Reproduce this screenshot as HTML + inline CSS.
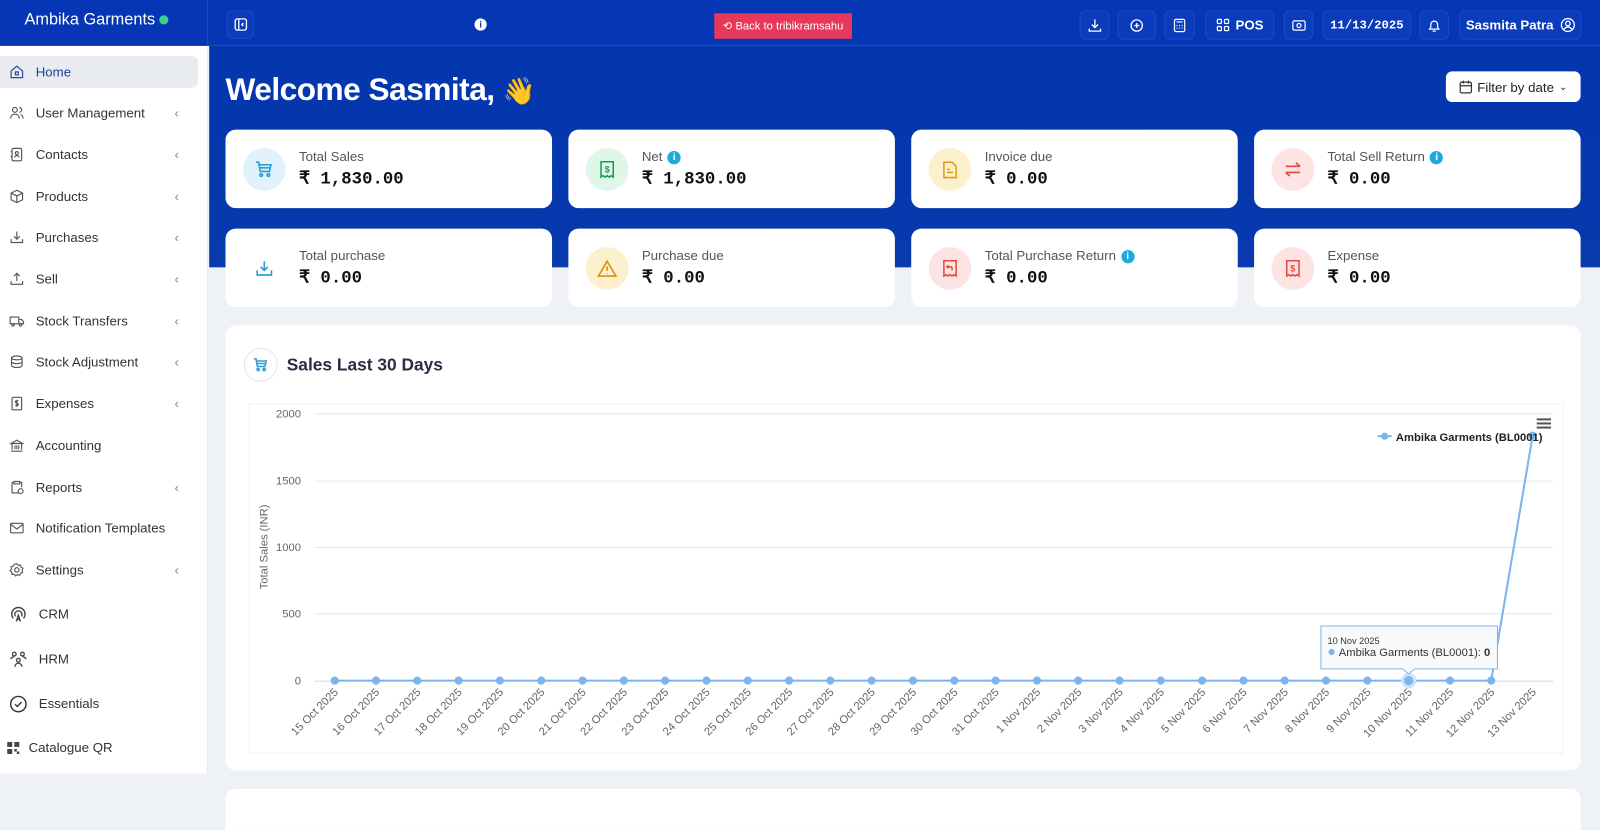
<!DOCTYPE html>
<html><head><meta charset="utf-8"><style>
*{box-sizing:border-box;margin:0;padding:0}
body{width:1600px;height:808px;overflow:hidden;background:#eef1f5;font-family:"Liberation Sans",sans-serif;position:relative}
#w{position:absolute;left:0;top:0;width:1568px;height:792px;transform:scale(1.020408);transform-origin:0 0}
.abs{position:absolute}
.top{left:0;top:0;width:1568px;height:45px;background:#0536b3;border-bottom:1px solid #1d4cc4}
.brand{left:0;top:0;width:204px;height:45px;background:#0636b5;color:#fff;font-size:16px;padding:11px 0 0 24px;border-right:1px solid #1d4cc4}
.brand i{display:inline-block;width:9px;height:9px;border-radius:50%;background:#3ecf8e;margin-left:4px}
.hero{left:205px;top:45px;width:1363px;height:217px;background:linear-gradient(#0335ad,#073aad)}
.side{left:0;top:45px;width:204px;height:713px;background:#fff;border-right:1px solid #e3e6ec}
.mi{position:absolute;left:0;width:194px;height:31px;font-size:13px;color:#333;display:flex;align-items:center}
.mi svg{position:absolute;left:9px;width:15px;height:15px}
.mi span{position:absolute;left:35px}
.mi b{position:absolute;left:171px;font-weight:normal;color:#888;font-size:13px}
.hb{position:absolute;top:10px;height:29px;border-radius:6px;background:#0a3cbc;border:1px solid #1a4ac6;color:#fff;font-size:13px;font-weight:bold;display:flex;align-items:center;justify-content:center;gap:6px}
.card{position:absolute;width:320px;background:#fff;border-radius:10px;height:77px}
.card .ic{position:absolute;left:17px;top:18px;width:42px;height:42px;border-radius:50%;display:flex;align-items:center;justify-content:center}
.card .t{position:absolute;left:72px;top:19px;font-size:13px;color:#555}
.card .v{position:absolute;left:72px;top:38px;font-size:17px;font-weight:bold;font-family:"Liberation Mono",monospace;color:#111}
.inf{display:inline-block;width:13px;height:13px;border-radius:50%;background:#1eaadf;color:#fff;font-size:10px;text-align:center;line-height:13px;font-weight:bold;margin-left:5px;vertical-align:1px}
</style></head><body><div id="w">
<div class="abs top"></div>
<div class="abs brand">Ambika Garments<i></i></div>
<div class="abs hero"></div>
<div class="hb" style="left:222px;width:27px;top:10px;height:28px"><svg width="14" height="14" viewBox="0 0 14 14" fill="none" stroke="#fff" stroke-width="1.3"><rect x="1.5" y="1.5" width="11" height="11" rx="2"/><path d="M5 2v10M9.5 5.5L8 7l1.5 1.5"/></svg></div>
<div class="abs" style="left:465px;top:18px;width:12px;height:12px;border-radius:50%;background:#fff;color:#0536b3;font-size:9px;font-weight:bold;text-align:center;line-height:12px">i</div>
<div class="abs" style="left:700px;top:13px;width:135px;height:25px;background:#e8385a;color:#fff;font-size:11px;display:flex;align-items:center;justify-content:center">⟲ Back to tribikramsahu</div>
<div class="hb" style="left:1058px;width:29px"><svg width="14" height="14" viewBox="0 0 14 14" fill="none" stroke="#fff" stroke-width="1.3"><path d="M7 1v8M4 6l3 3 3-3M1.5 10v2.5h11V10"/></svg></div>
<div class="hb" style="left:1095px;width:38px"><svg width="14" height="14" viewBox="0 0 14 14" fill="none" stroke="#fff" stroke-width="1.3"><circle cx="7" cy="7" r="5.5"/><path d="M7 4.5v5M4.5 7h5"/></svg></div>
<div class="hb" style="left:1141px;width:30px"><svg width="12" height="14" viewBox="0 0 12 14" fill="none" stroke="#fff" stroke-width="1.2"><rect x="1" y="1" width="10" height="12" rx="1.5"/><path d="M3 3.5h6M3 7h1M5.5 7h1M8 7h1M3 9.5h1M5.5 9.5h1M8 9.5h1"/></svg></div>
<div class="hb" style="left:1181px;width:68px"><svg width="13" height="13" viewBox="0 0 13 13" fill="none" stroke="#fff" stroke-width="1.2"><rect x="1" y="1" width="4" height="4" rx="1"/><rect x="8" y="1" width="4" height="4" rx="1"/><rect x="1" y="8" width="4" height="4" rx="1"/><rect x="8" y="8" width="4" height="4" rx="1"/></svg>POS</div>
<div class="hb" style="left:1258px;width:29px"><svg width="14" height="12" viewBox="0 0 14 12" fill="none" stroke="#fff" stroke-width="1.2"><rect x="1" y="1.5" width="12" height="9" rx="1.5"/><circle cx="7" cy="6" r="2"/></svg></div>
<div class="hb" style="left:1296px;width:87px;font-family:'Liberation Mono',monospace;font-size:12px">11/13/2025</div>
<div class="hb" style="left:1391px;width:29px"><svg width="13" height="14" viewBox="0 0 13 14" fill="none" stroke="#fff" stroke-width="1.2"><path d="M2 10.5h9l-1.2-2V6a3.3 3.3 0 0 0-6.6 0v2.5zM5 12.5h3"/></svg></div>
<div class="hb" style="left:1430px;width:120px">Sasmita Patra <svg width="15" height="15" viewBox="0 0 15 15" fill="none" stroke="#fff" stroke-width="1.3"><circle cx="7.5" cy="7.5" r="6.3"/><circle cx="7.5" cy="6" r="2.2"/><path d="M3.5 12c1-1.8 2.3-2.5 4-2.5s3 .7 4 2.5"/></svg></div>
<div class="abs side">
<div class="mi" style="top:10px;background:#e8ebf0;border-radius:0 6px 6px 0;color:#1d3f9c"><svg viewBox="0 0 16 16" fill="none" stroke="#2a4ca8" stroke-width="1.3"><path d="M2 7l6-5 6 5v7H2z"/><rect x="6.5" y="8" width="3" height="3"/></svg><span>Home</span></div>
<div class="mi" style="top:50px"><svg viewBox="0 0 16 16" fill="none" stroke="#555" stroke-width="1.2"><circle cx="6" cy="5" r="2.5"/><path d="M1.5 14c0-3 2-4.5 4.5-4.5S10.5 11 10.5 14M10.5 2.5a2.5 2.5 0 0 1 0 5M12 9.8c1.5.6 2.5 2 2.5 4.2"/></svg><span>User Management</span><b>‹</b></div>
<div class="mi" style="top:91px"><svg viewBox="0 0 16 16" fill="none" stroke="#555" stroke-width="1.2"><rect x="3" y="1.5" width="10" height="13" rx="1.5"/><circle cx="8" cy="6.5" r="1.6"/><path d="M5.5 11c.5-1.3 1.3-2 2.5-2s2 .7 2.5 2M1.5 5h2M1.5 10h2"/></svg><span>Contacts</span><b>‹</b></div>
<div class="mi" style="top:132px"><svg viewBox="0 0 16 16" fill="none" stroke="#555" stroke-width="1.2"><path d="M8 1.5l6 3v7l-6 3-6-3v-7zM2 4.5l6 3 6-3M8 7.5v7"/></svg><span>Products</span><b>‹</b></div>
<div class="mi" style="top:172px"><svg viewBox="0 0 16 16" fill="none" stroke="#555" stroke-width="1.2"><path d="M8 2v8M5 7l3 3 3-3M2 10v3.5h12V10"/></svg><span>Purchases</span><b>‹</b></div>
<div class="mi" style="top:213px"><svg viewBox="0 0 16 16" fill="none" stroke="#555" stroke-width="1.2"><path d="M8 10V2M5 5l3-3 3 3M2 10v3.5h12V10"/></svg><span>Sell</span><b>‹</b></div>
<div class="mi" style="top:254px"><svg viewBox="0 0 16 16" fill="none" stroke="#555" stroke-width="1.2"><path d="M1 4h9v7H1zM10 6.5h3l2 2.5v2h-5"/><circle cx="4" cy="12" r="1.3"/><circle cx="12" cy="12" r="1.3"/></svg><span>Stock Transfers</span><b>‹</b></div>
<div class="mi" style="top:294px"><svg viewBox="0 0 16 16" fill="none" stroke="#555" stroke-width="1.2"><ellipse cx="8" cy="4" rx="5.5" ry="2"/><path d="M2.5 4v8c0 1.1 2.5 2 5.5 2s5.5-.9 5.5-2V4M2.5 8c0 1.1 2.5 2 5.5 2s5.5-.9 5.5-2"/></svg><span>Stock Adjustment</span><b>‹</b></div>
<div class="mi" style="top:335px"><svg viewBox="0 0 16 16" fill="none" stroke="#555" stroke-width="1.2"><rect x="3" y="1.5" width="10" height="13" rx="1"/><path d="M9.5 5.5C9 5 8.5 5 8 5c-1 0-1.5.5-1.5 1.2S7 7.3 8 7.6s1.5.7 1.5 1.4S9 10.3 8 10.3c-.6 0-1.1-.2-1.5-.6M8 4v7.5"/></svg><span>Expenses</span><b>‹</b></div>
<div class="mi" style="top:376px"><svg viewBox="0 0 16 16" fill="none" stroke="#555" stroke-width="1.2"><path d="M2 6l6-3.5L14 6zM2 14h12M3 6.5v6M6 8v4M8 8v4M10 8v4M13 6.5v6"/></svg><span>Accounting</span></div>
<div class="mi" style="top:417px"><svg viewBox="0 0 16 16" fill="none" stroke="#555" stroke-width="1.2"><path d="M10 14H3V3h2M11 3h2v5M5 2h6v2.5H5z"/><circle cx="12" cy="12" r="2.5"/></svg><span>Reports</span><b>‹</b></div>
<div class="mi" style="top:457px"><svg viewBox="0 0 16 16" fill="none" stroke="#555" stroke-width="1.2"><rect x="1.5" y="3" width="13" height="10" rx="1"/><path d="M1.5 4l6.5 5 6.5-5"/></svg><span>Notification Templates</span></div>
<div class="mi" style="top:498px"><svg viewBox="0 0 16 16" fill="none" stroke="#555" stroke-width="1.2"><circle cx="8" cy="8" r="2.3"/><path d="M8 1.5l1.5 1.8 2.3-.4.6 2.2 2 1.2-1 2.1.7 2.2-2.2.8-.9 2.2-2.3-.6-1.9 1.4-1.5-1.8-2.3.1-.2-2.3-1.8-1.5 1.3-1.9-.4-2.3 2.3-.5 1.1-2z"/></svg><span>Settings</span><b>‹</b></div>
<div class="mi" style="top:541px"><svg viewBox="0 0 18 18" style="width:18px;height:18px" fill="none" stroke="#444" stroke-width="1.4"><path d="M4 13A6.5 6.5 0 1 1 14 13M6 11a3.5 3.5 0 1 1 6 0M7 16l2-6 2 6M7.6 14h2.8"/></svg><span style="left:38px">CRM</span></div>
<div class="mi" style="top:585px"><svg viewBox="0 0 18 18" style="width:18px;height:18px" fill="none" stroke="#444" stroke-width="1.3"><circle cx="5" cy="4" r="1.8"/><circle cx="13" cy="4" r="1.8"/><circle cx="9" cy="10" r="1.8"/><path d="M1.5 9c.5-1.5 1.8-2.3 3.5-2.3M16.5 9c-.5-1.5-1.8-2.3-3.5-2.3M5.5 16.5c0-2 1.5-3.5 3.5-3.5s3.5 1.5 3.5 3.5"/></svg><span style="left:38px">HRM</span></div>
<div class="mi" style="top:629px"><svg viewBox="0 0 18 18" style="width:18px;height:18px" fill="none" stroke="#333" stroke-width="1.4"><circle cx="9" cy="9" r="7.5"/><path d="M5.8 9.2l2.2 2.2 4.2-4.5"/></svg><span style="left:38px">Essentials</span></div>
<div class="mi" style="top:672px"><svg viewBox="0 0 12 12" style="left:7px;width:12px;height:12px" fill="#444"><rect x="0" y="0" width="5" height="5"/><rect x="7" y="0" width="5" height="5"/><rect x="0" y="7" width="5" height="5"/><rect x="7" y="7" width="2.5" height="2.5"/><rect x="9.5" y="9.5" width="2.5" height="2.5"/></svg><span style="left:28px">Catalogue QR</span></div>
</div>
<div class="abs" style="left:221px;top:70px;color:#fff;font-size:31px;font-weight:bold;letter-spacing:-0.5px">Welcome Sasmita, <span style="font-size:26px">👋</span></div>
<div class="abs" style="left:1417px;top:70px;width:132px;height:30px;background:#fff;border-radius:6px;font-size:13px;color:#222;display:flex;align-items:center;justify-content:center;gap:5px"><svg width="13" height="14" viewBox="0 0 13 14" fill="none" stroke="#333" stroke-width="1.2"><rect x="1" y="2.5" width="11" height="10.5" rx="1.5"/><path d="M1 6h11M4 1v3M9 1v3"/></svg>Filter by date <span style="font-size:10px">⌄</span></div>
<div class="card" style="left:221px;top:127px"><div class="ic" style="background:#e2f2fd"><svg width="18" height="18" viewBox="0 0 18 18" fill="none" stroke="#2b9ed8" stroke-width="1.6"><path d="M1 2h2.5l1.5 9h9l1.5-6.5H4.5M5 7.5h10"/><circle cx="6" cy="14.5" r="1.3"/><circle cx="13" cy="14.5" r="1.3"/></svg></div><div class="t">Total Sales</div><div class="v">₹ 1,830.00</div></div>
<div class="card" style="left:557px;top:127px"><div class="ic" style="background:#dff7e9"><svg width="16" height="18" viewBox="0 0 16 18" fill="none" stroke="#1c9a52" stroke-width="1.5"><path d="M2 1.5h12v15l-2-1.3-2 1.3-2-1.3-2 1.3-2-1.3-2 1.3z"/><text x="8" y="12" font-size="9" text-anchor="middle" fill="#1c9a52" stroke="none" font-weight="bold" font-family="Liberation Sans">$</text></svg></div><div class="t">Net<span class="inf">i</span></div><div class="v">₹ 1,830.00</div></div>
<div class="card" style="left:893px;top:127px"><div class="ic" style="background:#fdf0cc"><svg width="14" height="17" viewBox="0 0 14 17" fill="none" stroke="#e09a1a" stroke-width="1.5"><path d="M1 1h8l4 4v11H1zM4 8h3M4 11h6"/></svg></div><div class="t">Invoice due</div><div class="v">₹ 0.00</div></div>
<div class="card" style="left:1229px;top:127px"><div class="ic" style="background:#fde3e3"><svg width="18" height="16" viewBox="0 0 18 16" fill="none" stroke="#e04a3a" stroke-width="1.6"><path d="M2 5h14M12 1.5L16 5M16 11H2M6 14.5L2 11"/></svg></div><div class="t">Total Sell Return<span class="inf">i</span></div><div class="v">₹ 0.00</div></div>
<div class="card" style="left:221px;top:224px"><div class="ic" style="background:#fff"><svg width="18" height="18" viewBox="0 0 18 18" fill="none" stroke="#2b9ed8" stroke-width="1.6"><path d="M9 2v9M5.5 7.5L9 11l3.5-3.5M2 11v4.5h14V11"/></svg></div><div class="t">Total purchase</div><div class="v">₹ 0.00</div></div>
<div class="card" style="left:557px;top:224px"><div class="ic" style="background:#fdf0cc"><svg width="20" height="18" viewBox="0 0 20 18" fill="none" stroke="#d99010" stroke-width="1.6"><path d="M10 2L1.5 16.5h17zM10 7v4.5M10 13.5v.5"/></svg></div><div class="t">Purchase due</div><div class="v">₹ 0.00</div></div>
<div class="card" style="left:893px;top:224px"><div class="ic" style="background:#fde3e3"><svg width="16" height="18" viewBox="0 0 16 18" fill="none" stroke="#e04a3a" stroke-width="1.5"><path d="M2 1.5h12v15l-2-1.3-2 1.3-2-1.3-2 1.3-2-1.3-2 1.3zM6.5 6L5 7.5 6.5 9M5 7.5h3.5c1 0 1.5.7 1.5 1.5V11"/></svg></div><div class="t">Total Purchase Return<span class="inf">i</span></div><div class="v">₹ 0.00</div></div>
<div class="card" style="left:1229px;top:224px"><div class="ic" style="background:#fde3e3"><svg width="16" height="18" viewBox="0 0 16 18" fill="none" stroke="#e04a3a" stroke-width="1.5"><path d="M2 1.5h12v15l-2-1.3-2 1.3-2-1.3-2 1.3-2-1.3-2 1.3z"/><text x="8" y="12" font-size="9" text-anchor="middle" fill="#e04a3a" stroke="none" font-weight="bold" font-family="Liberation Sans">$</text></svg></div><div class="t">Expense</div><div class="v">₹ 0.00</div></div>
<div class="abs" style="left:221px;top:319px;width:1328px;height:436px;background:#fff;border-radius:10px"></div>
<div class="abs" style="left:239px;top:341px;width:33px;height:33px;border-radius:50%;border:1px solid #e4e7ec;background:#fff;display:flex;align-items:center;justify-content:center"><svg width="15" height="15" viewBox="0 0 18 18" fill="none" stroke="#2b9ed8" stroke-width="1.8"><path d="M1 2h2.5l1.5 9h9l1.5-6.5H4.5M5 7.5h10"/><circle cx="6" cy="14.5" r="1.3"/><circle cx="13" cy="14.5" r="1.3"/></svg></div>
<div class="abs" style="left:281px;top:348px;font-size:17px;font-weight:bold;color:#2b2d42">Sales Last 30 Days</div>
<div class="abs" style="left:221px;top:773px;width:1328px;height:40px;background:#fff;border-radius:10px 10px 0 0"></div>
<svg class="abs" style="left:0;top:0" width="1568" height="792" font-family="Liberation Sans,sans-serif">
<rect x="244" y="396" width="1288" height="342" fill="none" stroke="#f0f1f4"/>
<g stroke="#e6e6e6" stroke-width="1"><line x1="308" y1="405.5" x2="1522" y2="405.5"/><line x1="308" y1="471.5" x2="1522" y2="471.5"/><line x1="308" y1="536.5" x2="1522" y2="536.5"/><line x1="308" y1="601.5" x2="1522" y2="601.5"/><line x1="308" y1="667.5" x2="1522" y2="667.5" stroke="#ccd6eb"/></g>
<g font-size="11" fill="#666" text-anchor="end"><text x="295" y="409">2000</text><text x="295" y="475">1500</text><text x="295" y="540">1000</text><text x="295" y="605">500</text><text x="295" y="671">0</text></g>
<text transform="translate(262,536) rotate(-90)" font-size="11" fill="#666" text-anchor="middle">Total Sales (INR)</text>
<polyline fill="none" stroke="#7cb5ec" stroke-width="2" points="328,667 1461.4,667 1502,427"/>
<g fill="#7cb5ec">
<circle cx="328" cy="667" r="4"/><circle cx="368.5" cy="667" r="4"/><circle cx="409" cy="667" r="4"/><circle cx="449.4" cy="667" r="4"/><circle cx="489.9" cy="667" r="4"/><circle cx="530.4" cy="667" r="4"/><circle cx="570.9" cy="667" r="4"/><circle cx="611.4" cy="667" r="4"/><circle cx="651.8" cy="667" r="4"/><circle cx="692.3" cy="667" r="4"/><circle cx="732.8" cy="667" r="4"/><circle cx="773.3" cy="667" r="4"/><circle cx="813.8" cy="667" r="4"/><circle cx="854.2" cy="667" r="4"/><circle cx="894.7" cy="667" r="4"/><circle cx="935.2" cy="667" r="4"/><circle cx="975.7" cy="667" r="4"/><circle cx="1016.2" cy="667" r="4"/><circle cx="1056.6" cy="667" r="4"/><circle cx="1097.1" cy="667" r="4"/><circle cx="1137.6" cy="667" r="4"/><circle cx="1178.1" cy="667" r="4"/><circle cx="1218.6" cy="667" r="4"/><circle cx="1259" cy="667" r="4"/><circle cx="1299.5" cy="667" r="4"/><circle cx="1340" cy="667" r="4"/><circle cx="1380.5" cy="667" r="6" stroke="#cfe2f7" stroke-width="3"/><circle cx="1421" cy="667" r="4"/><circle cx="1461.4" cy="667" r="4"/><circle cx="1502" cy="427" r="4"/>
</g>
<g font-size="11" fill="#666" text-anchor="end">
<text transform="translate(332,679) rotate(-45)">15 Oct 2025</text><text transform="translate(372.5,679) rotate(-45)">16 Oct 2025</text><text transform="translate(413,679) rotate(-45)">17 Oct 2025</text><text transform="translate(453.4,679) rotate(-45)">18 Oct 2025</text><text transform="translate(493.9,679) rotate(-45)">19 Oct 2025</text><text transform="translate(534.4,679) rotate(-45)">20 Oct 2025</text><text transform="translate(574.9,679) rotate(-45)">21 Oct 2025</text><text transform="translate(615.4,679) rotate(-45)">22 Oct 2025</text><text transform="translate(655.8,679) rotate(-45)">23 Oct 2025</text><text transform="translate(696.3,679) rotate(-45)">24 Oct 2025</text><text transform="translate(736.8,679) rotate(-45)">25 Oct 2025</text><text transform="translate(777.3,679) rotate(-45)">26 Oct 2025</text><text transform="translate(817.8,679) rotate(-45)">27 Oct 2025</text><text transform="translate(858.2,679) rotate(-45)">28 Oct 2025</text><text transform="translate(898.7,679) rotate(-45)">29 Oct 2025</text><text transform="translate(939.2,679) rotate(-45)">30 Oct 2025</text><text transform="translate(979.7,679) rotate(-45)">31 Oct 2025</text><text transform="translate(1020.2,679) rotate(-45)">1 Nov 2025</text><text transform="translate(1060.6,679) rotate(-45)">2 Nov 2025</text><text transform="translate(1101.1,679) rotate(-45)">3 Nov 2025</text><text transform="translate(1141.6,679) rotate(-45)">4 Nov 2025</text><text transform="translate(1182.1,679) rotate(-45)">5 Nov 2025</text><text transform="translate(1222.6,679) rotate(-45)">6 Nov 2025</text><text transform="translate(1263,679) rotate(-45)">7 Nov 2025</text><text transform="translate(1303.5,679) rotate(-45)">8 Nov 2025</text><text transform="translate(1344,679) rotate(-45)">9 Nov 2025</text><text transform="translate(1384.5,679) rotate(-45)">10 Nov 2025</text><text transform="translate(1425,679) rotate(-45)">11 Nov 2025</text><text transform="translate(1465.4,679) rotate(-45)">12 Nov 2025</text><text transform="translate(1506,679) rotate(-45)">13 Nov 2025</text>
</g>
<line x1="1350" y1="427.5" x2="1364" y2="427.5" stroke="#7cb5ec" stroke-width="2"/><circle cx="1357" cy="427.5" r="3.5" fill="#7cb5ec"/>
<text x="1368" y="432" font-size="11" font-weight="bold" fill="#222">Ambika Garments (BL0001)</text>
<g fill="#555"><rect x="1506" y="410" width="14" height="2"/><rect x="1506" y="414" width="14" height="2"/><rect x="1506" y="418" width="14" height="2"/></g>
<path d="M1294.5,613.5h173v42h-81l-6,5-6,-5h-80z" fill="#f8f9fb" stroke="#7cb5ec"/>
<text x="1301" y="631" font-size="9" fill="#333">10 Nov 2025</text>
<circle cx="1305" cy="639" r="3" fill="#7cb5ec"/>
<text x="1312" y="643" font-size="11" fill="#333">Ambika Garments (BL0001): <tspan font-weight="bold">0</tspan></text>
</svg>
</div></body></html>
